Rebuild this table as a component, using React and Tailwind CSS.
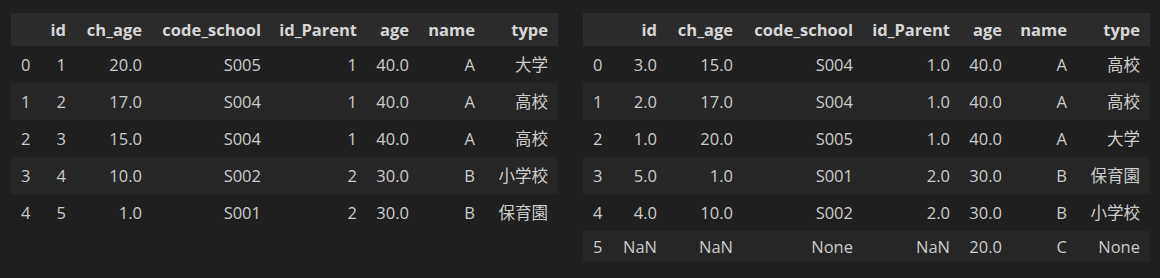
import React from "react";

const headers = ["", "id", "ch_age", "code_school", "id_Parent", "age", "name", "type"];

const t1 = {
  widths: [29, 36, 76, 119, 96, 52, 66, 73],
  rows: [
    ["0", "1", "20.0", "S005", "1", "40.0", "A", "大学"],
    ["1", "2", "17.0", "S004", "1", "40.0", "A", "高校"],
    ["2", "3", "15.0", "S004", "1", "40.0", "A", "高校"],
    ["3", "4", "10.0", "S002", "2", "30.0", "B", "小学校"],
    ["4", "5", "1.0", "S001", "2", "30.0", "B", "保育園"],
  ],
};

const t2 = {
  widths: [30, 54, 76, 120, 97, 52, 65, 73],
  rows: [
    ["0", "3.0", "15.0", "S004", "1.0", "40.0", "A", "高校"],
    ["1", "2.0", "17.0", "S004", "1.0", "40.0", "A", "高校"],
    ["2", "1.0", "20.0", "S005", "1.0", "40.0", "A", "大学"],
    ["3", "5.0", "1.0", "S001", "2.0", "30.0", "B", "保育園"],
    ["4", "4.0", "10.0", "S002", "2.0", "30.0", "B", "小学校"],
    ["5", "NaN", "NaN", "None", "NaN", "20.0", "C", "None"],
  ],
};

function Table({ data }) {
  const total = data.widths.reduce((a, b) => a + b, 0);
  return (
    <table className="table-fixed border-collapse" style={{ width: total }}>
      <colgroup>
        {data.widths.map((w, i) => (
          <col key={i} style={{ width: w }} />
        ))}
      </colgroup>
      <thead>
        <tr className="h-[33px] bg-[#2b2b2b]">
          {headers.map((h, i) => (
            <th
              key={i}
              className="p-0 pr-[10px] text-right font-bold text-[#d6d6d6] whitespace-nowrap align-middle"
            >
              {h}
            </th>
          ))}
        </tr>
      </thead>
      <tbody>
        {data.rows.map((r, ri) => {
          const hasCjk = /[\u3040-\u9fff]/.test(r[7]);
          return (
            <tr
              key={ri}
              className={`${hasCjk ? "h-[37px]" : "h-[31px]"} ${ri % 2 === 1 ? "bg-[#262626]" : ""}`}
            >
              {r.map((c, ci) => (
                <td
                  key={ci}
                  className={
                    ci === 0
                      ? "p-0 pl-[10px] text-left whitespace-nowrap align-middle"
                      : "p-0 pr-[10px] text-right whitespace-nowrap align-middle"
                  }
                >
                  {c}
                </td>
              ))}
            </tr>
          );
        })}
      </tbody>
    </table>
  );
}

export default function App() {
  return (
    <div
      className="w-[1160px] h-[278px] bg-[#1f1f1f] text-[#cccccc] text-[16.5px] leading-[22px] overflow-hidden"
      style={{ fontFamily: '"Open Sans", "Noto Sans CJK JP", sans-serif' }}
    >
      <div className="flex items-start gap-[25px] pl-[11px] pt-[13px]">
        <Table data={t1} />
        <Table data={t2} />
      </div>
    </div>
  );
}
